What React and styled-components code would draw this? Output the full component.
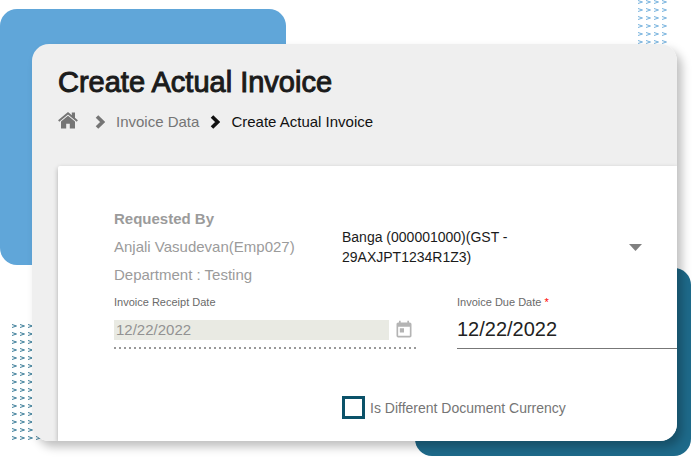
import React, { useState } from 'react';
import styled, { createGlobalStyle } from 'styled-components';
import { MdToday } from 'react-icons/md';

const GlobalStyle = createGlobalStyle`
  * {
    box-sizing: border-box;
  }

  body {
    margin: 0;
    background: #fff;
    font-family: "Liberation Sans", Arial, sans-serif;
  }

  input, select {
    font-family: inherit;
  }
`;

const Page = styled.div`
  position: relative;
  min-height: 100vh;
  overflow: hidden;
  display: flex;
  padding: 44px 19px 18px 32px;
`;

const Blob = styled.div`
  position: absolute;
  border-radius: 17px;
  background: ${({ color }) => color};
`;

const BlueBlob = styled(Blob)`
  top: 9px;
  left: 0;
  width: 286px;
  height: 256px;
`;

const TealBlob = styled(Blob)`
  right: 5px;
  bottom: 3px;
  width: 276px;
  height: 188px;
`;

const Pattern = styled.svg`
  position: absolute;
  opacity: 0.85;
`;

const TopPattern = styled(Pattern)`
  top: 0;
  right: 26px;
`;

const SidePattern = styled(Pattern)`
  left: 12px;
  bottom: 17px;
`;

const Card = styled.main`
  flex: 1;
  min-width: 0;
  display: flex;
  flex-direction: column;
  padding: 21px 0 0 26px;
  border-radius: 17px;
  overflow: hidden;
  background: #efefef;
`;

const Shadow = styled.div`
  position: relative;
  flex: 1;
  min-width: 0;
  display: flex;
  border-radius: 17px;
  box-shadow: 5px 6px 10px rgba(0, 0, 0, 0.25);
`;

const Title = styled.h1`
  margin: 0;
  font-size: 29px;
  line-height: 34px;
  font-weight: 400;
  color: #1b1b1b;
  -webkit-text-stroke: 1px #1b1b1b;
`;

const Breadcrumb = styled.nav`
  display: flex;
  align-items: center;
  margin-top: 13px;
  font-size: 15px;
  line-height: 20px;
  color: #111;
`;

const Crumb = styled.a`
  display: flex;
  color: #757575;
  text-decoration: none;
`;

const HomeCrumb = styled(Crumb)`
  margin-right: 6px;
  padding-bottom: 3px;
`;

const Arrow = styled.svg`
  margin: 0 11px;
`;

const Panel = styled.form`
  flex: 1;
  display: flex;
  flex-direction: column;
  margin-top: 34px;
  padding: 39px 0 21px 56px;
  background: #fff;
  border-radius: 2px 0 0 0;
  box-shadow: 0 2px 5px rgba(0, 0, 0, 0.28);
`;

const Row = styled.div`
  display: grid;
  grid-template-columns: 228px 1fr;
  align-items: center;
`;

const DateRow = styled.div`
  display: grid;
  grid-template-columns: 304px 1fr;
  column-gap: 39px;
  margin-top: 5px;
`;

const Requester = styled.div`
  font-size: 15px;
  line-height: 28px;
  color: #9b9b9b;
`;

const Vendor = styled.div`
  display: flex;
  align-items: center;
  justify-content: space-between;
  margin-right: 35px;
`;

const VendorSelect = styled.select`
  appearance: none;
  flex: 0 1 200px;
  min-width: 0;
  padding: 0;
  border: 0;
  background: transparent;
  color: #1b1b1b;
  font-size: 14px;
  line-height: 20px;
  white-space: pre-wrap;
`;

const Label = styled.label`
  display: block;
  font-size: 11px;
  line-height: 16px;
  color: #6a6a6a;
`;

const Required = styled.span`
  color: #f00;
`;

const Control = styled.div`
  display: flex;
  align-items: center;
  gap: 5px;
  height: 39px;
  ${({ $disabled }) => $disabled
    ? 'background: repeating-linear-gradient(90deg, #999 0 2px, transparent 2px 5px) bottom / 100% 2px no-repeat;'
    : 'border-bottom: 1px solid #777;'}
`;

const DateInput = styled.input`
  flex: 1;
  min-width: 0;
  height: 20px;
  padding: 0 2px;
  border: 0;
  background: #e9eae3;
  color: #929292;
  font-size: 15px;
`;

const DueInput = styled(DateInput)`
  height: 24px;
  padding: 0;
  background: transparent;
  color: #222;
  font-size: 20px;
`;

const CalendarButton = styled.button`
  display: flex;
  padding: 0;
  margin-right: 4px;
  border: 0;
  background: none;
  color: #b4b4b4;
`;

const CurrencyRow = styled(Row)`
  margin-top: 47px;
`;

const CheckLabel = styled.label`
  grid-column: 2;
  display: flex;
  align-items: center;
  gap: 5px;
  font-size: 14px;
  line-height: 20px;
  color: #757575;
`;

const Checkbox = styled.input`
  appearance: none;
  width: 23px;
  height: 23px;
  margin: 0;
  border: 3px solid #0b5269;
  background: #fff;

  &:checked {
    box-shadow: inset 0 0 0 3px #fff;
    background: #0b5269;
  }
`;

const arrows = (rows, cols) => {
  let d = '';
  for (let y = 0; y < rows; y++) {
    for (let x = 0; x < cols; x++) {
      d += `M${x * 8} ${y * 8 + 0.5}l4.5 1.5l-4.5 1.5`;
    }
  }
  return d;
};

const HomeIcon = () => (
  <svg width="20" height="17" viewBox="0 0 20 17" aria-hidden="true">
    <path d="M0.7 9L10 1.3l9.3 7.7" fill="none" stroke="currentColor" strokeWidth="1.9" />
    <path d="M13.8 0.4h3.2v6.8l-3.2-2.6z" fill="currentColor" />
    <path d="M10 3.7l7 5.7V16.6h-5.2v-4.8H8.2v4.8H3V9.4z" fill="currentColor" />
  </svg>
);

const Chevron = ({ color }) => (
  <Arrow width="10" height="14" viewBox="0 0 10 14" aria-hidden="true">
    <path d="M2 1.5L7.6 7 2 12.5" fill="none" stroke={color} strokeWidth="3.6" />
  </Arrow>
);

const InvoiceForm = () => {
  const [dueDate, setDueDate] = useState('12/22/2022');

  return <Panel>
    <Row>
      <Requester>
        <div><b>Requested By</b></div>
        <div>Anjali Vasudevan(Emp027)</div>
        <div>Department : Testing</div>
      </Requester>
      <Vendor>
        <VendorSelect aria-label="Vendor">
          <option>Banga (000001000)(GST - 29AXJPT1234R1Z3)</option>
        </VendorSelect>
        <svg width="13" height="7" viewBox="0 0 13 7" aria-hidden="true">
          <path d="M0 0h13L6.5 7z" fill="#808080" />
        </svg>
      </Vendor>
    </Row>
    <DateRow>
      <div>
        <Label htmlFor="receipt">Invoice Receipt Date</Label>
        <Control $disabled>
          <DateInput id="receipt" defaultValue="12/22/2022" disabled />
          <CalendarButton type="button" aria-label="Pick receipt date" disabled>
            <MdToday size={20} />
          </CalendarButton>
        </Control>
      </div>
      <div>
        <Label htmlFor="due">Invoice Due Date <Required>*</Required></Label>
        <Control>
          <DueInput id="due" value={dueDate} onChange={e => setDueDate(e.target.value)} />
        </Control>
      </div>
    </DateRow>
    <CurrencyRow>
      <CheckLabel>
        <Checkbox type="checkbox" />
        Is Different Document Currency
      </CheckLabel>
    </CurrencyRow>
  </Panel>
}

export default function App() {
  return <Page>
    <GlobalStyle />
    <BlueBlob color="#60a6d9" />
    <TealBlob color="#1e6a8a" />
    <TopPattern width="32" height="44" aria-hidden="true">
      <path d={arrows(6, 4)} fill="none" stroke="#60a6d9" />
    </TopPattern>
    <SidePattern width="32" height="118" aria-hidden="true">
      <path d={arrows(15, 4)} fill="none" stroke="#1e6a8a" />
    </SidePattern>
    <Shadow>
      <Card>
        <Title>Create Actual Invoice</Title>
        <Breadcrumb aria-label="Breadcrumb">
          <HomeCrumb href="#home" aria-label="Home"><HomeIcon /></HomeCrumb>
          <Chevron color="#757575" />
          <Crumb href="#invoices">Invoice Data</Crumb>
          <Chevron color="#111" />
          <span aria-current="page">Create Actual Invoice</span>
        </Breadcrumb>
        <InvoiceForm />
      </Card>
    </Shadow>
  </Page>
}
